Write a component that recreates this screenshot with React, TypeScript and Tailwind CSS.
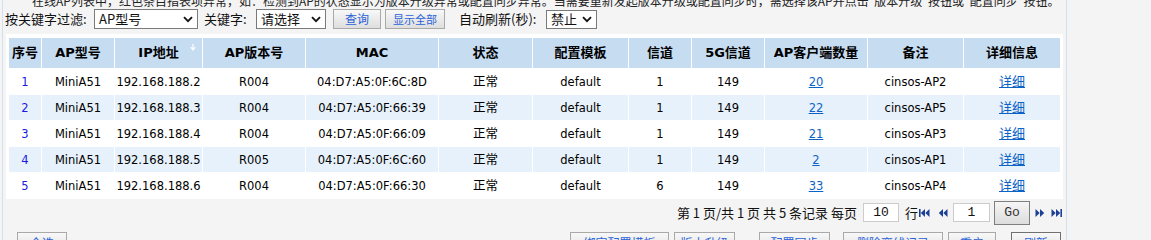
import React from 'react';

interface ApRow {
  id: number;
  model: string;
  ip: string;
  version: string;
  mac: string;
  status: string;
  template: string;
  channel: number;
  channel5g: number;
  clients: number;
  remark: string;
}

const rows: ApRow[] = [
  { id: 1, model: 'MiniA51', ip: '192.168.188.2', version: 'R004', mac: '04:D7:A5:0F:6C:8D', status: '正常', template: 'default', channel: 1, channel5g: 149, clients: 20, remark: 'cinsos-AP2' },
  { id: 2, model: 'MiniA51', ip: '192.168.188.3', version: 'R004', mac: '04:D7:A5:0F:66:39', status: '正常', template: 'default', channel: 1, channel5g: 149, clients: 22, remark: 'cinsos-AP5' },
  { id: 3, model: 'MiniA51', ip: '192.168.188.4', version: 'R004', mac: '04:D7:A5:0F:66:09', status: '正常', template: 'default', channel: 1, channel5g: 149, clients: 21, remark: 'cinsos-AP3' },
  { id: 4, model: 'MiniA51', ip: '192.168.188.5', version: 'R005', mac: '04:D7:A5:0F:6C:60', status: '正常', template: 'default', channel: 1, channel5g: 149, clients: 2, remark: 'cinsos-AP1' },
  { id: 5, model: 'MiniA51', ip: '192.168.188.6', version: 'R004', mac: '04:D7:A5:0F:66:30', status: '正常', template: 'default', channel: 6, channel5g: 149, clients: 33, remark: 'cinsos-AP4' },
];

const columns = [
  { title: '序号', width: 32 },
  { title: 'AP型号', width: 72 },
  { title: 'IP地址', width: 87 },
  { title: 'AP版本号', width: 102 },
  { title: 'MAC', width: 132 },
  { title: '状态', width: 93 },
  { title: '配置模板', width: 95 },
  { title: '信道', width: 62 },
  { title: '5G信道', width: 72 },
  { title: 'AP客户端数量', width: 102 },
  { title: '备注', width: 95 },
  { title: '详细信息', width: 96 },
];

const Chevron = () => (
  <svg width="10" height="7" viewBox="0 0 10 7" className="shrink-0">
    <path d="M1 1.2 L5 5.2 L9 1.2" fill="none" stroke="#111" strokeWidth="1.8" />
  </svg>
);

const FakeSelect = ({ label, className }: { label: string; className: string }) => (
  <div className={`flex items-center justify-between border border-[#7a7a7a] bg-white pl-[4px] pr-[4px] text-[13px] text-[#111] ${className}`}>
    <span>{label}</span>
    <Chevron />
  </div>
);

const GrayButton = ({ label, className }: { label: string; className: string }) => (
  <div className={`flex items-center justify-center border border-[#a9a9a9] bg-linear-to-b from-[#f8f8f8] to-[#dedede] text-[#2a62d8] ${className}`}>
    {label}
  </div>
);

const PageIcon = ({ kind }: { kind: 'first' | 'prev' | 'next' | 'last' }) => {
  const fill = '#1d3f96';
  if (kind === 'first')
    return (
      <svg width="11" height="10" viewBox="0 0 11 10">
        <rect x="0" y="1" width="1.6" height="8" fill={fill} />
        <path d="M6 1 L1.8 5 L6 9 Z M10.5 1 L6.3 5 L10.5 9 Z" fill={fill} />
      </svg>
    );
  if (kind === 'prev')
    return (
      <svg width="10" height="10" viewBox="0 0 10 10">
        <path d="M5 1 L0.8 5 L5 9 Z M9.5 1 L5.3 5 L9.5 9 Z" fill={fill} />
      </svg>
    );
  if (kind === 'next')
    return (
      <svg width="10" height="10" viewBox="0 0 10 10">
        <path d="M0.5 1 L4.7 5 L0.5 9 Z M5 1 L9.2 5 L5 9 Z" fill={fill} />
      </svg>
    );
  return (
    <svg width="11" height="10" viewBox="0 0 11 10">
      <path d="M0.5 1 L4.7 5 L0.5 9 Z M5 1 L9.2 5 L5 9 Z" fill={fill} />
      <rect x="9.4" y="1" width="1.6" height="8" fill={fill} />
    </svg>
  );
};

export default function App() {
  return (
    <div className="h-[240px] overflow-hidden w-[1151px] bg-[#f4f4f4] font-['Noto_Sans_CJK_SC',sans-serif] text-[#111]">
      <div className="ml-[2px] w-[1065px] border-x border-[#d3e0ee] min-h-[240px]">
        {/* Note line, cut off at the top */}
        <div className="h-[8px] pl-[29px]">
          <p className="relative -top-[5px] whitespace-nowrap text-[12px] leading-[12px] text-[#222]">
            在线AP列表中，红色条目指表项异常，如：检测到AP的状态显示为版本升级异常或配置同步异常。当需要重新发起版本升级或配置同步时，需选择该AP并点击"版本升级"按钮或"配置同步"按钮。
          </p>
        </div>

        {/* Filter bar */}
        <div className="flex h-[22px] items-center pl-[2px] text-[13px]">
          <span className="w-[89px] whitespace-nowrap">按关键字过滤:</span>
          <FakeSelect label="AP型号" className="h-[20px] w-[104px]" />
          <span className="ml-[6px] w-[52px] whitespace-nowrap">关键字:</span>
          <FakeSelect label="请选择" className="h-[20px] w-[70px]" />
          <GrayButton label="查询" className="ml-[7px] h-[20px] w-[48px] text-[12px]" />
          <GrayButton label="显示全部" className="ml-[4px] h-[20px] w-[60px] text-[11px]" />
          <span className="ml-[14px] w-[87px] whitespace-nowrap">自动刷新(秒):</span>
          <FakeSelect label="禁止" className="h-[19px] w-[51px]" />
        </div>

        {/* AP table */}
        <div className="ml-[3px] mt-[4px] w-[1057px] bg-white px-[2px] pt-[3px]">
          <table className="w-[1053px] table-fixed border-separate border-spacing-[1px]">
            <colgroup>
              {columns.map((c) => (
                <col key={c.title} style={{ width: c.width }} />
              ))}
            </colgroup>
            <thead>
              <tr className="h-[30px] bg-[#c6dcf1]">
                {columns.map((c) => (
                  <th
                    key={c.title}
                    className="relative p-0 text-center text-[13px] leading-[16px] font-bold text-black font-['DejaVu_Sans','Noto_Sans_CJK_SC',sans-serif] whitespace-nowrap"
                  >
                    {c.title}
                    {c.title === 'IP地址' && (
                      <svg width="6" height="7" viewBox="0 0 6 7" className="absolute right-[6px] top-[6px]">
                        <path d="M3 0 V5 M0.8 3.2 L3 6 L5.2 3.2" fill="none" stroke="#fff" strokeWidth="1.2" />
                      </svg>
                    )}
                  </th>
                ))}
              </tr>
            </thead>
            <tbody className="font-['DejaVu_Sans','Noto_Sans_CJK_SC',sans-serif] text-[11.5px] leading-[16px] text-black">
              {rows.map((r, i) => (
                <tr key={r.id} className={`h-[25px] ${i % 2 === 1 ? 'bg-[#e7f1fb]' : 'bg-white'}`}>
                  <td className="p-0 text-center text-[#1a1ae0]">{r.id}</td>
                  <td className="p-0 text-center">{r.model}</td>
                  <td className="p-0 text-center">{r.ip}</td>
                  <td className="p-0 text-center">{r.version}</td>
                  <td className="p-0 text-center">{r.mac}</td>
                  <td className="p-0 text-center text-[12.5px]">{r.status}</td>
                  <td className="p-0 text-center">{r.template}</td>
                  <td className="p-0 text-center">{r.channel}</td>
                  <td className="p-0 text-center">{r.channel5g}</td>
                  <td className="p-0 text-center">
                    <a className="text-[#0b63c6] underline">{r.clients}</a>
                  </td>
                  <td className="p-0 text-center">{r.remark}</td>
                  <td className="p-0 text-center">
                    <a className="text-[13px] text-[#0b63c6] underline">详细</a>
                  </td>
                </tr>
              ))}
            </tbody>
          </table>
        </div>

        {/* Pagination */}
        <div className="mt-[1px] flex h-[25px] items-center justify-end pr-[4px] text-[13px]">
          <span className="whitespace-nowrap">第 1 页/共 1 页 共 5 条记录 每页</span>
          <div className="ml-[6px] flex h-[19px] w-[36px] items-center justify-center border border-[#cccccc] bg-white font-['Liberation_Mono',monospace] text-[13px]">
            10
          </div>
          <span className="ml-[6px]">行</span>
          <span className="ml-[1px] flex items-center"><PageIcon kind="first" /></span>
          <span className="ml-[8px] flex items-center"><PageIcon kind="prev" /></span>
          <div className="ml-[5px] flex h-[19px] w-[37px] items-center justify-center border border-[#cccccc] bg-white font-['Liberation_Mono',monospace] text-[13px]">
            1
          </div>
          <div className="ml-[4px] flex h-[24px] w-[36px] items-center justify-center border border-[#7f7f7f] bg-linear-to-b from-[#f6f6f6] to-[#dcdcdc] font-['Liberation_Mono',monospace] text-[13px] text-[#333]">
            Go
          </div>
          <span className="ml-[5px] flex items-center"><PageIcon kind="next" /></span>
          <span className="ml-[6px] flex items-center"><PageIcon kind="last" /></span>
        </div>

        {/* Action buttons */}
        <div className="mt-[7px] flex text-[12px]">
          <GrayButton label="全选" className="ml-[14px] h-[22px] w-[50px]" />
          <div className="ml-auto mr-[5px] flex">
            <GrayButton label="绑定配置模板" className="h-[22px] w-[99px]" />
            <GrayButton label="版本升级" className="ml-[5px] h-[22px] w-[61px]" />
            <GrayButton label="配置同步" className="ml-[24px] h-[22px] w-[71px]" />
            <GrayButton label="删除离线记录" className="ml-[13px] h-[22px] w-[100px]" />
            <GrayButton label="重启" className="ml-[5px] h-[22px] w-[48px]" />
            <div className="ml-[15px] flex h-[22px] w-[50px] items-center justify-center border border-[#707070] bg-linear-to-b from-[#f8f8f8] to-[#dedede] text-[#2a62d8]">
              刷新
            </div>
          </div>
        </div>
      </div>
    </div>
  );
}
